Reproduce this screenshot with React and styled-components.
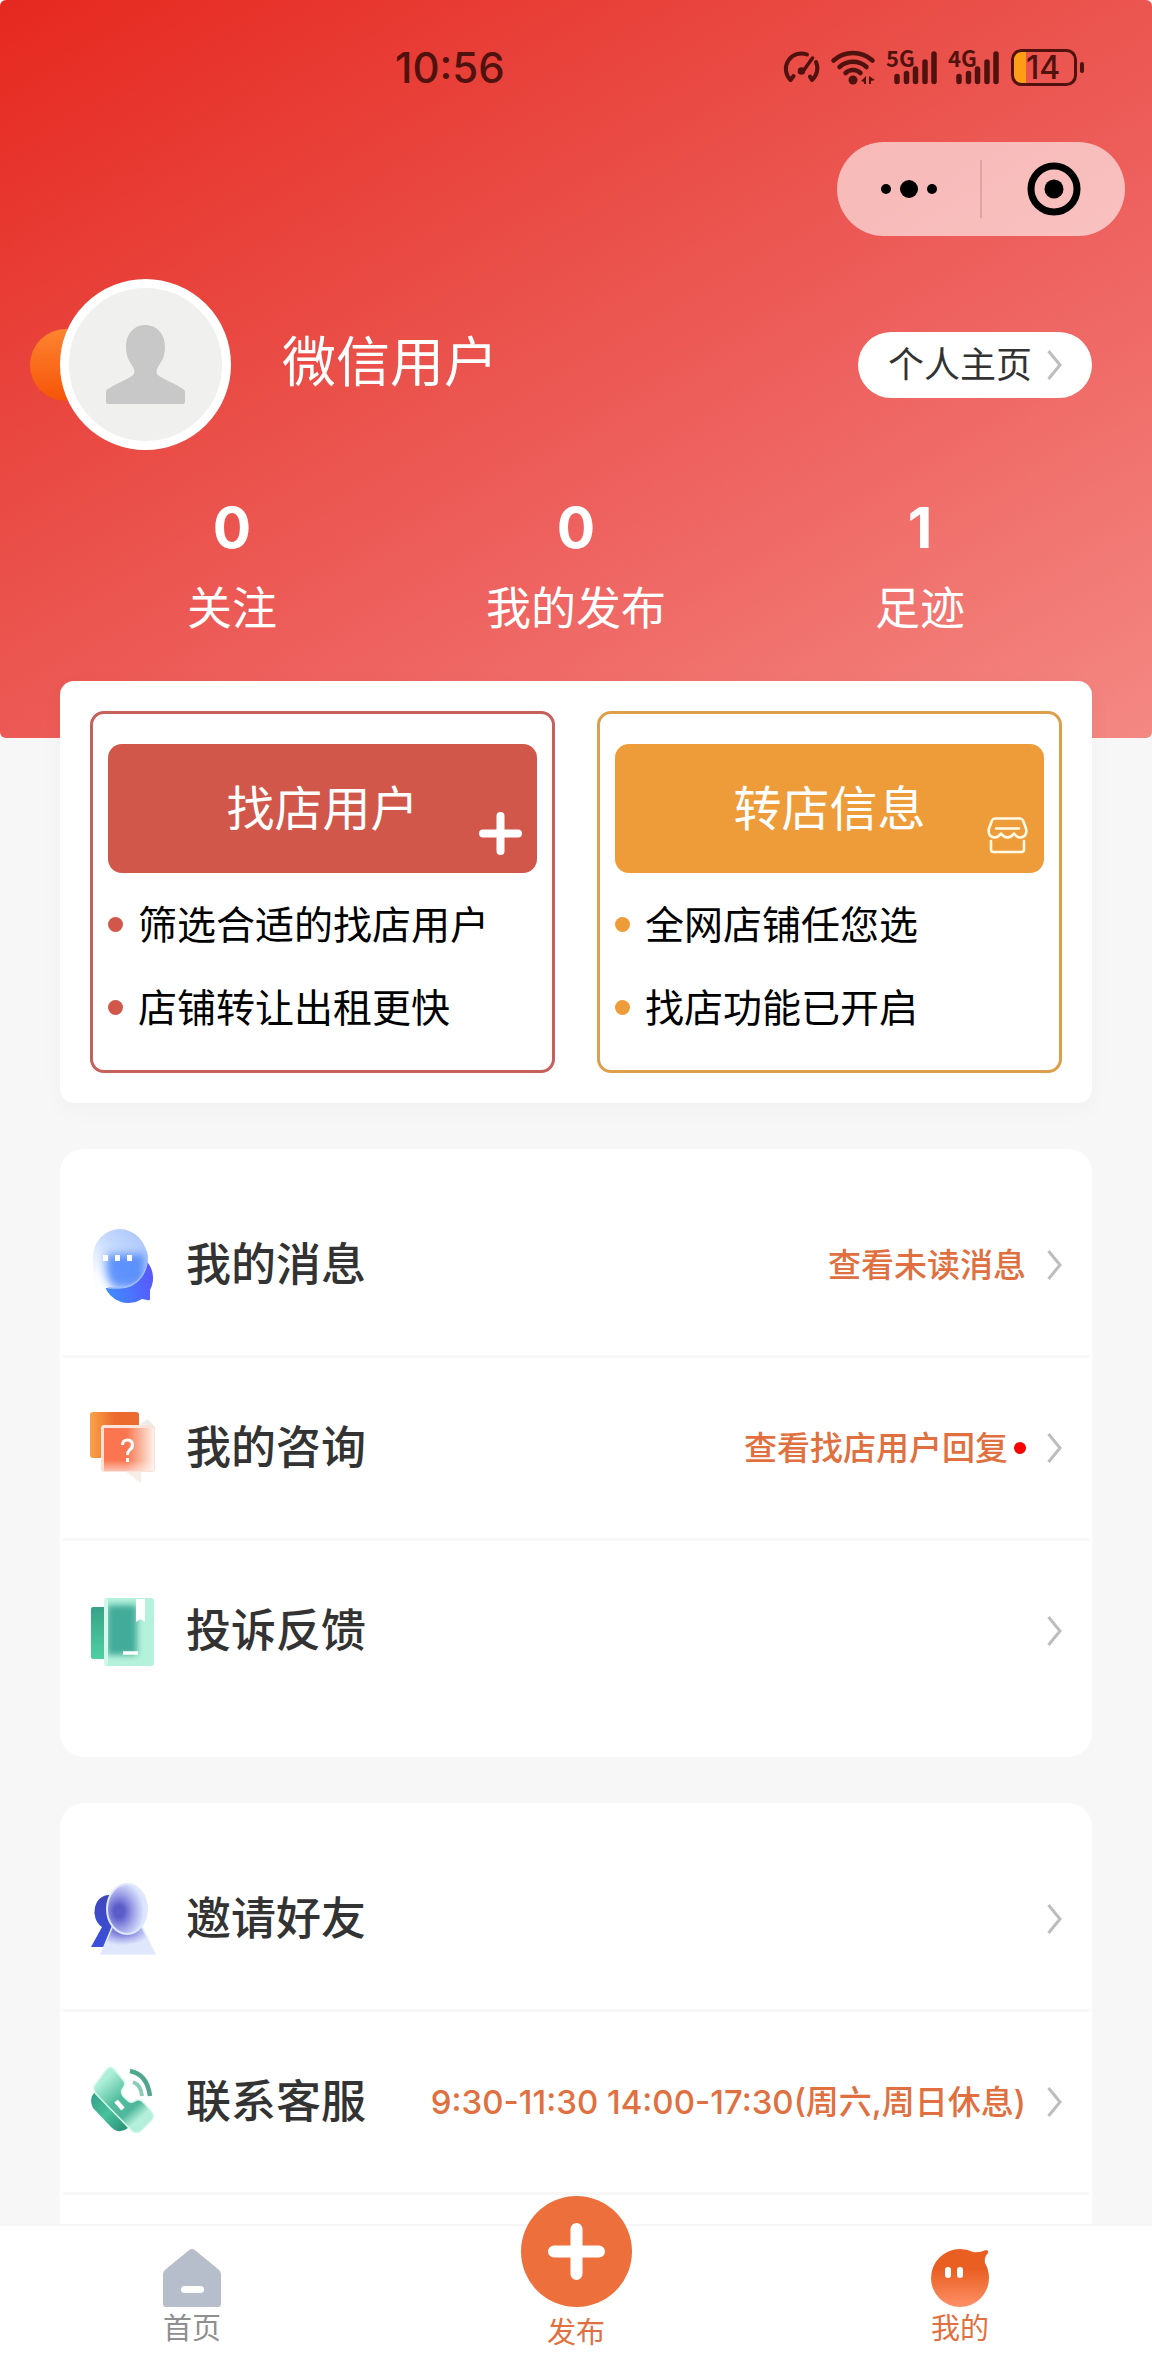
import React from 'react';
import styled, { createGlobalStyle } from 'styled-components';

const GlobalStyle = createGlobalStyle`
  * {
    box-sizing: border-box;
  }
  body {
    margin: 0;
    background: #f7f7f7;
    font-family: Inter, "Noto Sans CJK SC", sans-serif;
    color: #333;
  }
  button {
    font-family: inherit;
    border: none;
    padding: 0;
    cursor: pointer;
  }
  a {
    color: inherit;
    text-decoration: none;
  }
  ul {
    list-style: none;
    margin: 0;
    padding: 0;
  }
  svg {
    display: block;
    flex-shrink: 0;
  }
`;

const Page = styled.div`
  display: flex;
  flex-direction: column;
  min-height: 100vh;
`;

const Header = styled.header`
  height: 738px;
  border-radius: 6px;
  background: linear-gradient(150deg, #e6281f 0%, #e94a43 35%, #ee625f 62%, #f48883 100%);
  color: #fff;
`;

const StatusBar = styled.div`
  display: flex;
  align-items: center;
  justify-content: space-between;
  height: 142px;
  padding: 0 67px 6px 395px;
  color: #4f120e;
`;

const Clock = styled.time`
  font-size: 42px;
  font-weight: 500;
  line-height: 60px;
`;

const Capsule = styled.div`
  display: flex;
  align-items: center;
  width: 288px;
  height: 94px;
  margin: 0 27px 0 auto;
  border-radius: 47px;
  background: rgba(255, 255, 255, 0.6);
`;

const CapsuleButton = styled.button`
  display: flex;
  flex: 1;
  align-items: center;
  justify-content: center;
  height: 58px;
  background: none;

  & + & {
    border-left: 2px solid #dfa5a3;
  }
`;

const Profile = styled.div`
  display: flex;
  align-items: center;
  margin-top: 43px;
  padding: 0 60px;
`;

const AvatarWrap = styled.div`
  position: relative;
  width: 171px;
  height: 171px;
`;

const Blob = styled.div`
  position: absolute;
  left: -30px;
  top: 50px;
  width: 72px;
  height: 72px;
  border-radius: 50%;
  background: linear-gradient(#fd8430, #f65408);
`;

const Avatar = styled.div`
  position: relative;
  width: 100%;
  height: 100%;
  overflow: hidden;
  border: 9px solid #fff;
  border-radius: 50%;
  background: #f0f0ef;
`;

const UserName = styled.h1`
  flex: 1;
  margin: 0 0 0 51px;
  padding-bottom: 4px;
  font-size: 54px;
  font-weight: 400;
  line-height: 78px;
`;

const HomeLink = styled.a`
  display: flex;
  align-items: center;
  gap: 15px;
  height: 66px;
  padding: 0 30px;
  border-radius: 33px;
  background: #fff;
  color: #333;
  font-size: 36px;
  line-height: 54px;
`;

const Stats = styled.div`
  display: grid;
  grid-template-columns: repeat(3, 1fr);
  margin-top: 42px;
  padding: 0 60px;
  text-align: center;
`;

const StatValue = styled.div`
  font-size: 57px;
  font-weight: 700;
  line-height: 72px;
`;

const StatLabel = styled.div`
  margin-top: 12px;
  font-size: 45px;
  line-height: 66px;
`;

const Entries = styled.section`
  display: grid;
  grid-template-columns: 1fr 1fr;
  gap: 42px;
  position: relative;
  margin: -57px 60px 0;
  padding: 30px;
  border-radius: 14px;
  background: #fff;
  box-shadow: 0 6px 24px rgba(0, 0, 0, 0.03);
`;

const Entry = styled.div`
  height: 362px;
  padding: 30px 15px 0;
  border: 3px solid ${(props) => props.$line};
  border-radius: 14px;
  color: ${(props) => props.$color};
`;

const EntryButton = styled.button`
  position: relative;
  width: 100%;
  height: 129px;
  border-radius: 14px;
  background: ${(props) => props.$color};
  color: #fff;
  font-size: 48px;
  line-height: 69px;
`;

const EntryIcon = styled.span`
  position: absolute;
  right: 15px;
  bottom: 18px;
`;

const Points = styled.ul`
  padding-top: 10px;
`;

const Point = styled.li`
  display: flex;
  align-items: center;
  gap: 15px;
  height: 83px;
  font-size: 39px;
  line-height: 57px;

  &::before {
    content: '';
    width: 15px;
    height: 15px;
    border-radius: 50%;
    background: currentColor;
  }

  span {
    color: #000;
  }
`;

const Card = styled.ul`
  margin: 46px 60px 0;
  padding: 26px 3px 0;
  border-radius: 24px;
  background: #fff;

  &:first-of-type {
    padding-bottom: 33px;
  }

  &:last-of-type {
    flex: 1;
    border-radius: 24px 24px 0 0;
  }
`;

const Row = styled.a`
  display: flex;
  align-items: center;
  height: 183px;
  padding: 0 27px;
  border-bottom: 3px solid ${(props) => (props.$last ? 'transparent' : '#f7f7f7')};
`;

const RowTitle = styled.span`
  flex: 1;
  margin-left: 30px;
  font-size: 45px;
  font-weight: 500;
  line-height: 66px;
`;

const RowNote = styled.span`
  margin-right: 21px;
  color: #e0703f;
  font-size: 33px;
  font-weight: 500;
  line-height: 48px;
`;

const RedDot = styled.i`
  width: 12px;
  height: 12px;
  margin: 0 21px 0 -15px;
  border-radius: 50%;
  background: #fa0000;
`;

const TabBar = styled.nav`
  display: grid;
  grid-template-columns: repeat(3, 1fr);
  position: sticky;
  bottom: 0;
  height: 152px;
  border-top: 2px solid #f5f5f5;
  background: #fff;
`;

const Tab = styled.a`
  display: flex;
  flex-direction: column;
  align-items: center;
  padding-top: 23px;
  color: ${(props) => (props.$active ? '#e0703f' : '#8f8f8f')};
  font-size: 29px;
  line-height: 44px;
`;

const PublishTab = styled(Tab)`
  gap: 4px;
  margin-top: -30px;
  padding-top: 0;
`;

const PublishCircle = styled.span`
  display: flex;
  align-items: center;
  justify-content: center;
  width: 111px;
  height: 111px;
  border-radius: 50%;
  background: #ed703c;
`;

const Chevron = () => (
  <svg width="15" height="30" viewBox="0 0 15 30" fill="none" stroke="#bdbdbd" strokeWidth="3">
    <path d="M1.5 1l11.5 14L1.5 29" />
  </svg>
);

const StatusIcons = () => (
  <svg width="302" height="56" viewBox="783 40 302 56" fill="none" stroke="currentColor">
    <g strokeWidth="4" strokeLinecap="round" strokeLinejoin="round">
      <path d="M807 54.5a15.500 15.500 0 0 0-16.500 25.500l3-4" />
      <path d="M816 62a15.500 15.500 0 0 1-4 18l-2-3.500" />
      <path d="M812.500 58l-10 14" strokeWidth="3.500" />
    </g>
    <circle cx="801.500" cy="71" r="3.800" fill="currentColor" stroke="none" />
    <g strokeWidth="4.500" strokeLinecap="round">
      <path d="M833.500 60.500a29 29 0 0 1 39 0" />
      <path d="M839.500 67a20 20 0 0 1 27 0" />
      <path d="M845.500 73a11 11 0 0 1 15 0" />
    </g>
    <g fill="currentColor" stroke="none">
      <circle cx="853" cy="80" r="4.500" />
      <path d="M861 81l5-5v8h-2v-2zM869 76l6 4-4 1v3h-2z" />
      <text x="886" y="67" fontSize="22" fontWeight="700" fontFamily="Noto Sans CJK SC">5G</text>
      <text x="948" y="67" fontSize="22" fontWeight="700" fontFamily="Noto Sans CJK SC">4G</text>
    </g>
    <g strokeWidth="5.500" strokeLinecap="round">
      <path d="M897 76.500v5M906.500 73.500v8M915.500 69v12.500M925 62v19.500M934 54v27.500" />
      <path d="M959 76.500v5M968.500 73.500v8M977.500 69v12.500M987 62v19.500M996 54v27.500" />
    </g>
    <path d="M1026 52h-6a6 6 0 0 0-6 6v19a6 6 0 0 0 6 6h6z" fill="#ff9d16" stroke="none" />
    <rect x="1012.500" y="50.500" width="63" height="34" rx="9" strokeWidth="3" />
    <text x="1026" y="79" fontSize="32" fontWeight="500" fill="currentColor" stroke="none">14</text>
    <path d="M1082 64v7" strokeWidth="4" strokeLinecap="round" />
  </svg>
);

const DotsIcon = () => (
  <svg width="56" height="18" viewBox="0 0 56 18">
    <circle cx="5" cy="9" r="5" />
    <circle cx="28" cy="9" r="9" />
    <circle cx="51" cy="9" r="5" />
  </svg>
);

const TargetIcon = () => (
  <svg width="54" height="54" viewBox="0 0 54 54">
    <circle cx="27" cy="27" r="23" fill="none" stroke="#000" strokeWidth="7" />
    <circle cx="27" cy="27" r="9.500" />
  </svg>
);

const PersonIcon = () => (
  <svg width="153" height="153" viewBox="0 0 153 153" fill="#c8c8c8">
    <path d="M76 37c12 0 20 9 20 22 0 9-3 14-7 20-2 4-2 7 1 9 8 5 17 8 24 13 2 1 2 2 2 4v9q0 2-2 2H39q-2 0-2-2v-9c0-2 0-3 2-4 7-5 16-8 24-13 3-2 3-5 1-9-4-6-7-11-7-20 0-13 8-22 19-22z" />
  </svg>
);

const PlusIcon = ({ size = 43, stroke = 8 }) => (
  <svg width={size} height={size} viewBox={`0 0 ${size} ${size}`} stroke="#fff" strokeWidth={stroke} strokeLinecap="round">
    <path d={`M${size / 2} ${stroke / 2}V${size - stroke / 2}M${stroke / 2} ${size / 2}H${size - stroke / 2}`} />
  </svg>
);

const ShopIcon = () => (
  <svg width="43" height="40" viewBox="-2 -2 43 40" fill="none" stroke="#fffbe6" strokeWidth="2.600" strokeLinecap="round" strokeLinejoin="round">
    <path d="M7 1.500h25q2 0 3 2l3 8q1 4-1 7-2 2-5 2-3 0-6-4-3 4-6.500 4T13 16.500q-3 4-6 4-3 0-5-2-2-3-1-7l3-8q1-2 3-2z" />
    <path d="M8 11.500h23M3 24v8.500q0 2.500 2.500 2.500h28q2.500 0 2.500-2.500V24" />
  </svg>
);

const MessageIcon = () => (
  <svg width="66" height="76" viewBox="0 0 66 76">
    <defs>
      <linearGradient id="msgBack" x1="0" y1="0.600" x2="1" y2="0.300">
        <stop offset="0" stopColor="#3f8dff" />
        <stop offset="1" stopColor="#5a55fb" />
      </linearGradient>
      <linearGradient id="msgFront" x1="0.900" y1="0" x2="0.100" y2="0.800">
        <stop offset="0" stopColor="#a3c0f8" />
        <stop offset="0.500" stopColor="#c3d8fd" />
        <stop offset="1" stopColor="#fbfdff" />
      </linearGradient>
      <filter id="msgBlur" x="-30%" y="-30%" width="160%" height="160%">
        <feGaussianBlur stdDeviation="4" />
      </filter>
      <clipPath id="msgClip">
        <path d="M29 2a28.500 29.500 0 1 1 0 59H7q-4 0-4-4V30A27 28 0 0 1 29 2z" />
      </clipPath>
    </defs>
    <path d="M38 26a25 25 0 0 1 22 37v9q0 2-3 1l-5-1A25 25 0 1 1 38 26z" fill="url(#msgBack)" />
    <g clipPath="url(#msgClip)">
      <rect width="66" height="62" fill="url(#msgFront)" />
      <path d="M17 27h38v30l-10 4H24q-7-8-8-20z" fill="#4a83fb" opacity="0.850" filter="url(#msgBlur)" />
    </g>
    <path d="M56 24a28 29 0 0 1-27 37H18" fill="none" stroke="#9dbcff" strokeWidth="1.500" />
    <path d="M13 28h5v6h-5zM25 28h5v6h-5zM37 28h5v6h-5z" fill="#fff" />
  </svg>
);

const ConsultIcon = () => (
  <svg width="66" height="76" viewBox="0 0 66 76">
    <defs>
      <linearGradient id="askBack">
        <stop offset="0" stopColor="#f9a348" />
        <stop offset="0.500" stopColor="#ec6a2f" />
      </linearGradient>
      <linearGradient id="askFront">
        <stop offset="0.450" stopColor="#fb7650" />
        <stop offset="0.800" stopColor="#fbc3ad" />
        <stop offset="1" stopColor="#fdf0ea" />
      </linearGradient>
      <linearGradient id="askFade" x2="0" y2="1">
        <stop offset="0.750" stopColor="#fff" stopOpacity="0" />
        <stop offset="1" stopColor="#fff3ee" stopOpacity="0.600" />
      </linearGradient>
    </defs>
    <path d="M50 14l8-5 6 7z" fill="#ececea" />
    <rect x="0" y="2" width="49" height="46" rx="3" fill="url(#askBack)" />
    <path d="M35 61h16v12z" fill="#f5ede6" />
    <rect x="11" y="15" width="54" height="47" rx="3" fill="#fbe3d9" />
    <rect x="14" y="18" width="50" height="43" fill="url(#askFront)" />
    <rect x="14" y="18" width="50" height="43" fill="url(#askFade)" />
    <path d="M32.500 35q0-5 5-5t5 5q0 3-3 5-2 2-2 5M37.500 48v4" fill="none" stroke="#fff" strokeWidth="3" />
  </svg>
);

const FeedbackIcon = () => (
  <svg width="66" height="76" viewBox="0 0 66 76">
    <defs>
      <linearGradient id="bookBack" x2="0" y2="1">
        <stop offset="0" stopColor="#38a287" />
        <stop offset="1" stopColor="#4ed0a2" />
      </linearGradient>
      <filter id="bookBlur" x="-30%" y="-30%" width="160%" height="160%">
        <feGaussianBlur stdDeviation="3" />
      </filter>
      <clipPath id="bookClip">
        <rect x="15" y="5" width="49" height="68" rx="3" />
      </clipPath>
    </defs>
    <rect x="1" y="14" width="20" height="52" rx="2" fill="url(#bookBack)" />
    <rect x="14" y="5" width="50" height="68" rx="3" fill="#b5f2dc" />
    <g clipPath="url(#bookClip)">
      <rect x="17" y="12" width="30" height="50" fill="#43ab99" filter="url(#bookBlur)" />
    </g>
    <path d="M16 6v66" stroke="#d3f8eb" strokeWidth="4" />
    <path d="M46 6h9v23l-4.500-3-4.500 3z" fill="#fff" />
    <path d="M33 60h15" stroke="#fff" strokeWidth="3.500" />
  </svg>
);

const InviteIcon = () => (
  <svg width="66" height="76" viewBox="0 0 66 76">
    <defs>
      <linearGradient id="friendBack" x2="0" y2="1">
        <stop offset="0" stopColor="#4046ba" />
        <stop offset="1" stopColor="#3a51dc" />
      </linearGradient>
      <radialGradient id="friendHead" cx="0.300" cy="0.550" r="0.620">
        <stop offset="0.200" stopColor="#5c5cc9" />
        <stop offset="0.600" stopColor="#a3a6ea" />
        <stop offset="1" stopColor="#dce5fc" />
      </radialGradient>
      <radialGradient id="friendBody" cx="0.400" cy="0.150" r="0.550">
        <stop offset="0.150" stopColor="#6564cd" />
        <stop offset="0.650" stopColor="#b2b6ee" />
        <stop offset="1" stopColor="#dfe7fc" />
      </radialGradient>
    </defs>
    <path d="M20 14a14 17 0 0 0-8 32l-11 20h22V14z" fill="url(#friendBack)" />
    <path d="M23 44h28l14 29H11z" fill="url(#friendBody)" stroke="#e4ebfd" strokeWidth="1.500" />
    <ellipse cx="37" cy="28" rx="20" ry="25" fill="url(#friendHead)" stroke="#dfe8fd" strokeWidth="2" />
  </svg>
);

const ServiceIcon = () => (
  <svg width="66" height="76" viewBox="0 0 66 76">
    <defs>
      <linearGradient id="phoneFront" x1="0.100" y1="0" x2="0.900" y2="1">
        <stop offset="0.150" stopColor="#aef0d7" />
        <stop offset="0.450" stopColor="#52bd9f" />
        <stop offset="0.650" stopColor="#4fb79b" />
        <stop offset="0.800" stopColor="#b3efda" />
      </linearGradient>
      <linearGradient id="phoneBack" x2="1" y2="1">
        <stop offset="0" stopColor="#2f9d83" />
        <stop offset="0.500" stopColor="#48c29c" />
        <stop offset="1" stopColor="#238b74" />
      </linearGradient>
    </defs>
    <path d="M6 27q-8 7-3 17l18 19q8 8 17 1z" fill="url(#phoneBack)" />
    <path d="M16 6q4-5 8-1l10 12q2 3-1 7-3 4 0 8l4 4q4 4 8 1 4-3 8 1l9 10q3 4 0 8L52 66q-5 5-10 1L6 30q-4-5-1-9z" fill="url(#phoneFront)" stroke="#d7f8eb" strokeWidth="1.500" />
    <path d="M26 37l7 8" stroke="#fff" strokeWidth="4.500" />
    <path d="M40 7q17 3 20 25" fill="none" stroke="#4fa78f" strokeWidth="4.500" />
    <path d="M43 18q8 3 9 14" fill="none" stroke="#8ccdb9" strokeWidth="4" />
  </svg>
);

const HomeIcon = () => (
  <svg width="58" height="58" viewBox="0 0 58 58">
    <path d="M29 0q2 0 4 2l22 18q3 2 3 5v30q0 3-3 3H3q-3 0-3-3V25q0-3 3-5L25 2q2-2 4-2z" fill="#b6bdcb" />
    <rect x="18" y="37" width="23" height="7" rx="3.500" fill="#fff" />
  </svg>
);

const MineIcon = () => (
  <svg width="58" height="58" viewBox="0 0 58 58">
    <defs>
      <linearGradient id="mineFill" x2="0" y2="1">
        <stop offset="0.350" stopColor="#e95f22" />
        <stop offset="1" stopColor="#ff9067" />
      </linearGradient>
    </defs>
    <path d="M29 0q7 0 13 3 6 1 13-2 3 0 2 3-4 4-3 10 4 7 4 15a29 29 0 0 1-58 0A29 29 0 0 1 29 0z" fill="url(#mineFill)" />
    <rect x="14" y="18" width="6" height="11" rx="3" fill="#fff" />
    <rect x="26" y="18" width="6" height="11" rx="3" fill="#fff" />
  </svg>
);

const stats = [
  { value: 0, label: '关注' },
  { value: 0, label: '我的发布' },
  { value: 1, label: '足迹' },
];

const entries = [
  {
    title: '找店用户',
    color: '#d1574a',
    line: '#c5605a',
    icon: <PlusIcon />,
    points: ['筛选合适的找店用户', '店铺转让出租更快'],
  },
  {
    title: '转店信息',
    color: '#ee9c3a',
    line: '#dd9f4b',
    icon: <ShopIcon />,
    points: ['全网店铺任您选', '找店功能已开启'],
  },
];

const messageRows = [
  { title: '我的消息', icon: <MessageIcon />, note: '查看未读消息' },
  { title: '我的咨询', icon: <ConsultIcon />, note: '查看找店用户回复', unread: true },
  { title: '投诉反馈', icon: <FeedbackIcon />, last: true },
];

const serviceRows = [
  { title: '邀请好友', icon: <InviteIcon /> },
  { title: '联系客服', icon: <ServiceIcon />, note: '9:30-11:30 14:00-17:30(周六,周日休息)' },
];

const MenuCard = ({ rows }) => (
  <Card>
    {rows.map((row) => (
      <li key={row.title}>
        <Row href="#" $last={row.last}>
          {row.icon}
          <RowTitle>{row.title}</RowTitle>
          {row.note && <RowNote>{row.note}</RowNote>}
          {row.unread && <RedDot />}
          <Chevron />
        </Row>
      </li>
    ))}
  </Card>
);

const App = () => {
  return (
    <>
      <GlobalStyle />
      <Page>
        <Header>
          <StatusBar>
            <Clock>10:56</Clock>
            <StatusIcons />
          </StatusBar>
          <Capsule>
            <CapsuleButton aria-label="更多"><DotsIcon /></CapsuleButton>
            <CapsuleButton aria-label="关闭"><TargetIcon /></CapsuleButton>
          </Capsule>
          <Profile>
            <AvatarWrap>
              <Blob />
              <Avatar><PersonIcon /></Avatar>
            </AvatarWrap>
            <UserName>微信用户</UserName>
            <HomeLink href="#">
              个人主页
              <Chevron />
            </HomeLink>
          </Profile>
          <Stats>
            {stats.map((stat) => (
              <div key={stat.label}>
                <StatValue>{stat.value}</StatValue>
                <StatLabel>{stat.label}</StatLabel>
              </div>
            ))}
          </Stats>
        </Header>

        <Entries>
          {entries.map((entry) => (
            <Entry key={entry.title} $color={entry.color} $line={entry.line}>
              <EntryButton $color={entry.color}>
                {entry.title}
                <EntryIcon>{entry.icon}</EntryIcon>
              </EntryButton>
              <Points>
                {entry.points.map((point) => (
                  <Point key={point}><span>{point}</span></Point>
                ))}
              </Points>
            </Entry>
          ))}
        </Entries>

        <MenuCard rows={messageRows} />
        <MenuCard rows={serviceRows} />

        <TabBar>
          <Tab href="#">
            <HomeIcon />
            首页
          </Tab>
          <PublishTab href="#" $active>
            <PublishCircle><PlusIcon size={57} stroke={12} /></PublishCircle>
            发布
          </PublishTab>
          <Tab href="#" $active>
            <MineIcon />
            我的
          </Tab>
        </TabBar>
      </Page>
    </>
  );
};

export default App;
